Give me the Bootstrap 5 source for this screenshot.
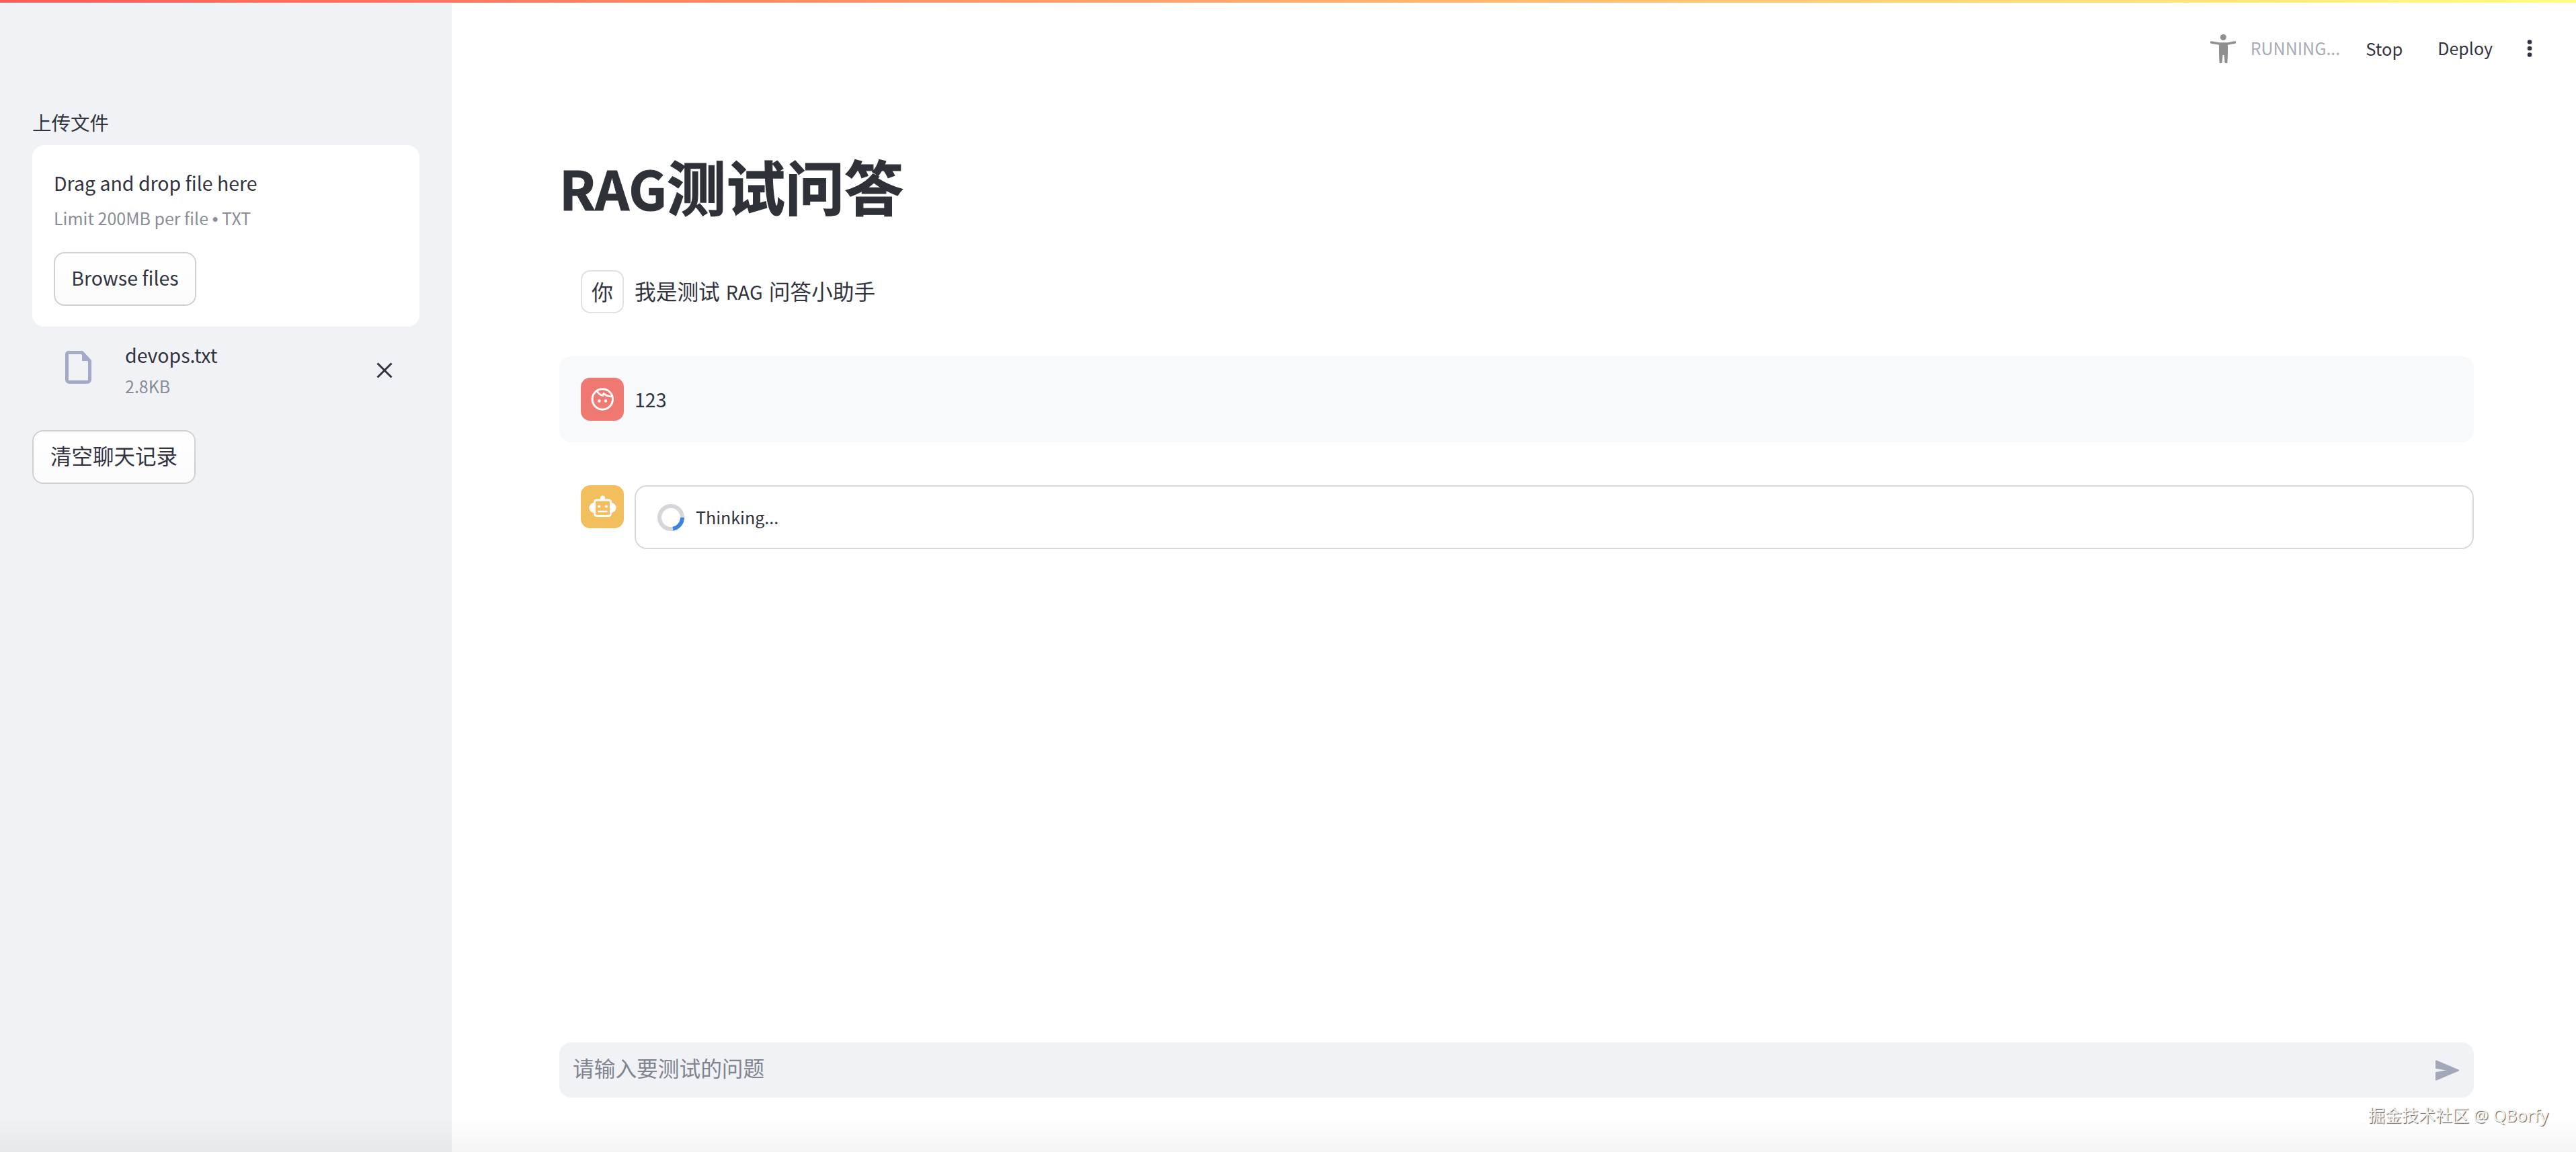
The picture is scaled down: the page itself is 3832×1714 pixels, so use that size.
<!DOCTYPE html>
<html lang="zh">
<head>
<meta charset="utf-8">
<title>RAG测试问答</title>
<link href="https://cdn.jsdelivr.net/npm/bootstrap@5.3.0/dist/css/bootstrap.min.css" rel="stylesheet">
<style>
html,body{height:100%;}
body{font-family:"Noto Sans CJK SC","Noto Sans",sans-serif;color:#31333f;overflow:hidden;background:#fff;}
.top-strip{position:absolute;top:0;left:0;right:0;height:4px;background:linear-gradient(90deg,#ff5a5a,#fffd80);z-index:5;}
.bottom-fade{position:absolute;left:0;right:0;bottom:0;height:54px;background:linear-gradient(180deg,rgba(0,0,0,0),rgba(0,0,0,.045));pointer-events:none;z-index:4;}
.page{height:1714px;}
.lat{font-size:.9em;}
.dot-sep{font-family:"Liberation Sans",sans-serif;}
.side{width:672px;flex:0 0 672px;background:#f0f2f6;padding:164px 48px 0;}
.side-label{font-size:28.5px;line-height:36px;margin-bottom:16px;}
.drop{background:#fff;border-radius:18px;padding:34px 32px 32px;height:270px;}
.drop-title{font-size:28.500px;line-height:44px;}
.drop-sub{font-size:25px;line-height:32px;margin-top:14px;color:#8a8c96;}
.st-btn{display:inline-flex;align-items:center;justify-content:center;height:80px;background:linear-gradient(180deg,#fff,#fbfbfc);border:2px solid #cfd0d3;border-radius:16px;color:#31333f;font-size:31.5px;padding:0 0 4px;}
.browse{margin-top:33px;width:212px;font-size:28.5px;}
.clear{margin-top:48px;width:243px;}
.file-row{margin-top:24px;height:82px;}
.file-ico{width:39px;height:49px;margin-left:49px;margin-right:50px;margin-top:-9px;flex:none;}
.file-name{font-size:28.5px;line-height:40px;margin-top:-4px;}
.file-size{font-size:25px;line-height:32px;margin-top:10px;color:#8a8c96;}
.file-x{width:24px;height:24px;margin-left:auto;margin-right:40px;flex:none;}
.main-col{min-width:0;height:1714px;}
.head{height:144px;padding-right:65px;}
.run-ico{width:38px;height:43px;margin-right:22px;}
.run-txt{font-size:25px;color:#a7abb8;margin-right:38px;}
.head-link{font-size:25.5px;color:#31333f;}
.head-deploy{font-size:25px;margin-left:52px;}
.dots{width:8px;height:26px;margin-left:51px;}
.body-col{padding:0 152px 0 160px;}
.ttl{font-size:88px;font-weight:700;line-height:100px;height:100px;margin:81px 0 45px;color:#2f3139;-webkit-text-stroke:1.2px #2f3139;}
.msg{display:flex;gap:16px;padding:32px 0 32px 32px;border-radius:18px;margin-bottom:32px;}
.msg-alt{background:#f8f9fb;}
.ava{width:64px;height:64px;flex:none;border-radius:14px;display:flex;align-items:center;justify-content:center;}
.ava-you{border:2px solid #dfe1e7;font-size:32px;background:#fff;padding-bottom:3px;}
.ava-red{background:#ef7970;}
.ava-yel{background:#f3bf5e;}
.msg-txt{font-size:31.7px;line-height:60px;height:64px;word-spacing:2px;}
.status{flex:1;height:95px;border:2px solid #d8d9dc;border-radius:18px;padding-left:32px;gap:17px;}
.status-txt{font-size:25px;}
.spin{width:40px;height:40px;flex:none;}
.ask{height:82px;background:#f0f2f6;border-radius:18px;margin:0 152px 81px 160px;padding:0 22px 0 20px;}
.ask input{background:transparent;border:0;padding:0 0 9px;height:100%;font-size:31.7px;color:#31333f;box-shadow:none;}
.ask input::placeholder{color:#80848f;opacity:1;}
.send{width:35px;height:31px;flex:none;}
.mark-txt{position:absolute;right:41px;top:1641px;font-family:"Noto Sans","Noto Sans CJK SC",sans-serif;font-size:25px;line-height:36px;color:#f4f4f4;text-shadow:1px 1px 1px #555;z-index:6;}
</style>
</head>
<body class="position-relative">
<div class="top-strip"></div>
<div class="page d-flex">
  <aside class="side">
    <div class="side-label">上传文件</div>
    <div class="drop">
      <div class="drop-title">Drag and drop file here</div>
      <div class="drop-sub">Limit 200MB per file <span class="dot-sep">•</span> TXT</div>
      <button type="button" class="btn st-btn browse">Browse files</button>
    </div>
    <div class="file-row d-flex align-items-center">
      <svg class="file-ico" viewBox="0 0 39 49"><path d="M5 2.500H25L36.500 15V43a3.500 3.500 0 0 1-3.500 3.500H6A3.500 3.500 0 0 1 2.500 43V5A2.500 2.500 0 0 1 5 2.500Z" fill="none" stroke="#a3a9c6" stroke-width="5" stroke-linejoin="round"/><path d="M25 2L37 15H25Z" fill="#a3a9c6"/></svg>
      <div>
        <div class="file-name">devops.txt</div>
        <div class="file-size">2.8KB</div>
      </div>
      <svg class="file-x" viewBox="0 0 24 24"><path d="M1.500 1.500L22.500 22.500M22.500 1.500L1.500 22.500" stroke="#31333f" stroke-width="3" fill="none"/></svg>
    </div>
    <button type="button" class="btn st-btn clear">清空聊天记录</button>
  </aside>
  <main class="main-col flex-grow-1 d-flex flex-column">
    <header class="head d-flex align-items-center justify-content-end">
      <svg class="run-ico" viewBox="0 0 38 43"><circle cx="19.300" cy="4.500" r="4.500" fill="#8f8f8f"/><path d="M1.500 12L13 14H26L36.500 12" stroke="#8f8f8f" stroke-width="3.500" stroke-linecap="round" fill="none"/><path d="M13 13H26V30L25.500 41.500a2 2 0 0 1-4 0L20.500 31H18.500L17.500 41.500a2 2 0 0 1-4 0L13 30Z" fill="#8f8f8f"/></svg>
      <span class="run-txt">RUNNING...</span>
      <span class="head-link">Stop</span>
      <span class="head-link head-deploy">Deploy</span>
      <svg class="dots" viewBox="0 0 8 26"><circle cx="4" cy="3.500" r="3.300" fill="#31333f"/><circle cx="4" cy="13" r="3.300" fill="#31333f"/><circle cx="4" cy="22.500" r="3.300" fill="#31333f"/></svg>
    </header>
    <div class="body-col">
      <h1 class="ttl"><span class="lat">RAG</span>测试问答</h1>
      <div class="msg">
        <div class="ava ava-you">你</div>
        <div class="msg-txt">我是测试 <span class="lat">RAG</span> 问答小助手</div>
      </div>
      <div class="msg msg-alt">
        <div class="ava ava-red">
          <svg width="64" height="64" viewBox="0 0 64 64" fill="none" stroke="#fff" stroke-width="3"><circle cx="32.300" cy="32" r="15.200"/><path d="M24 19.500C26 24 29 26 33 26.500C33 25 33.500 24 34 23.500C37 26.500 41 28 47 28" stroke-width="2.500"/><circle cx="27.500" cy="34.500" r="2.200" fill="#fff" stroke="none"/><circle cx="37" cy="34.500" r="2.200" fill="#fff" stroke="none"/></svg>
        </div>
        <div class="msg-txt"><span class="lat">123</span></div>
      </div>
      <div class="msg pb-0">
        <div class="ava ava-yel">
          <svg width="64" height="64" viewBox="0 0 64 64"><circle cx="32.500" cy="19" r="3.600" fill="#fff"/><path d="M20 26a6 6 0 0 0 0 15ZM45 26a6 6 0 0 1 0 15Z" fill="#fff"/><rect x="20.500" y="22" width="24" height="23.500" rx="3" fill="#f3bf5e" stroke="#fff" stroke-width="3"/><circle cx="27.200" cy="31.500" r="2" fill="#fff"/><circle cx="37.800" cy="31.500" r="2" fill="#fff"/><path d="M25.500 39H39.500" stroke="#fff" stroke-width="2.500"/></svg>
        </div>
        <div class="status d-flex align-items-center">
          <svg class="spin" viewBox="0 0 40 40" fill="none" stroke-width="6"><circle cx="20" cy="20" r="17" stroke="#d5d6d9"/><path d="M37 20A17 17 0 0 1 23 36.700" stroke="#3d82e0"/></svg>
          <span class="status-txt">Thinking...</span>
        </div>
      </div>
    </div>
    <div class="ask mt-auto d-flex align-items-center">
      <input class="form-control flex-grow-1" type="text" placeholder="请输入要测试的问题">
      <svg class="send" viewBox="0 0 35 31"><path d="M1 1.500L34 15.500L1 29.500V19L22 15.500L1 12Z" fill="#a3a8b8" stroke="#a3a8b8" stroke-width="2" stroke-linejoin="round"/></svg>
    </div>
  </main>
</div>
<div class="bottom-fade"></div>
<div class="mark-txt">掘金技术社区 @ QBorfy</div>
</body>
</html>
